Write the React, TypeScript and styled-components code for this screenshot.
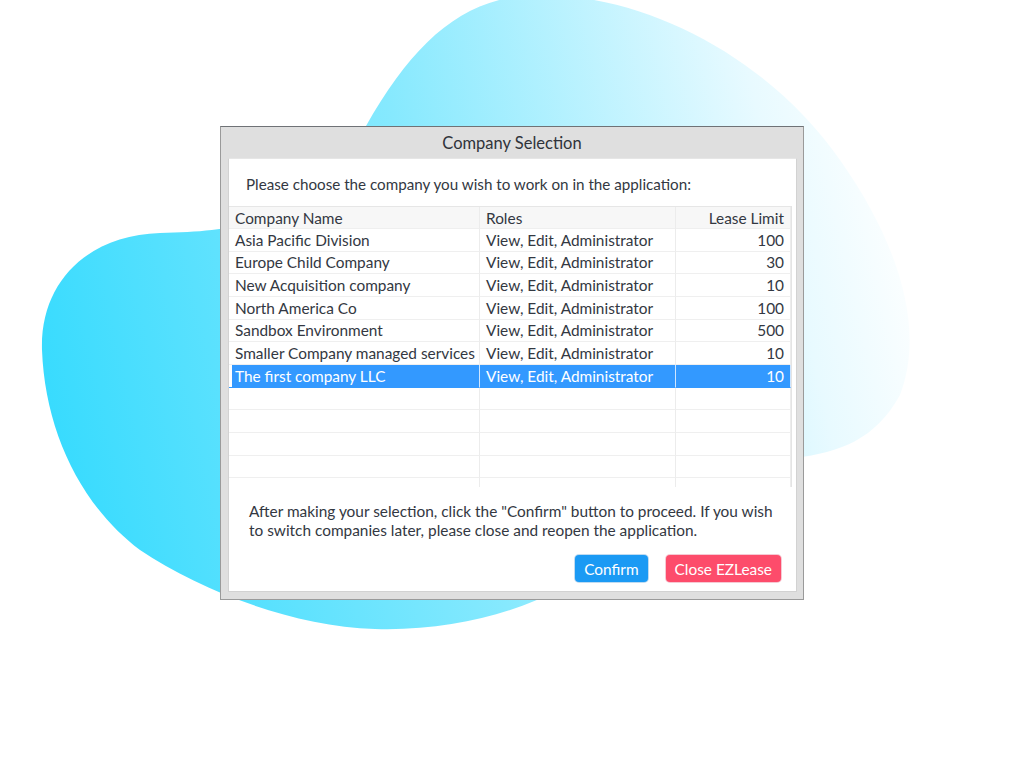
import React from "react";
import styled, { createGlobalStyle, css } from "styled-components";

const GlobalStyle = createGlobalStyle`
  html, body {
    margin: 0;
    padding: 0;
    background: #ffffff;
  }
  body {
    font-family: Lato, "Open Sans", "Liberation Sans", sans-serif;
    -webkit-font-smoothing: antialiased;
  }
`;

const Page = styled.div`
  position: relative;
  width: 1024px;
  height: 768px;
  overflow: hidden;
  background: #ffffff;
  display: flex;
  align-items: flex-start;
  padding: 126px 0 0 220px;
  box-sizing: border-box;
`;

const Blob = styled.svg`
  position: absolute;
  left: 0;
  top: 0;
  width: 1024px;
  height: 768px;
  z-index: 0;
`;

const Dialog = styled.section`
  position: relative;
  z-index: 1;
  width: 584px;
  height: 474px;
  box-sizing: border-box;
  background: #dfdfdf;
  border: 1px solid #9a9a9a;
  border-top-color: #6f7276;
  display: flex;
  flex-direction: column;
`;

const TitleBar = styled.header`
  height: 31px;
  display: flex;
  align-items: center;
  justify-content: center;
  font-size: 16.5px;
  color: #2f333a;
`;

const Body = styled.div`
  flex: 1;
  margin: 0 6px 7px 7px;
  background: #ffffff;
  border: 1px solid #d2d2d2;
  border-top-color: #e6e6e6;
  display: flex;
  flex-direction: column;
`;

const Intro = styled.p`
  margin: 0;
  padding: 15px 0 0 17px;
  height: 47px;
  box-sizing: border-box;
  font-size: 15.2px;
  line-height: 20px;
  color: #333842;
`;

const TableView = styled.div`
  width: 563px;
  height: 281px;
  overflow: hidden;
  border-right: 1px solid #e4e4e4;
  box-sizing: border-box;
  display: flex;
  flex-direction: column;
`;

const Row = styled.div<{ $header?: boolean; $selected?: boolean }>`
  display: grid;
  grid-template-columns: 251px 196px 115px;
  flex: 0 0 auto;
  height: ${(p) => (p.$header ? "23px" : "22.67px")};
  font-size: 15.4px;
  color: #333842;
  ${(p) =>
    p.$header &&
    css`
      background: #f7f7f7;
      border-top: 1px solid #e6e6e6;
      box-sizing: border-box;
    `}
  ${(p) =>
    p.$selected &&
    css`
      color: #ffffff;
    `}
`;

const Cell = styled.div<{ $right?: boolean; $selected?: boolean; $first?: boolean }>`
  display: flex;
  align-items: center;
  justify-content: ${(p) => (p.$right ? "flex-end" : "flex-start")};
  padding: 0 6px;
  box-sizing: border-box;
  border-right: 1px solid #ececec;
  border-bottom: 1px solid #efefef;
  white-space: nowrap;
  overflow: hidden;
  ${(p) =>
    p.$selected &&
    css`
      background: #3399ff;
      border-right-color: #cfe6ff;
      border-bottom-color: #3399ff;
    `}
  ${(p) =>
    p.$selected &&
    p.$first &&
    css`
      box-shadow: inset 3px 0 0 #ffffff;
    `}
`;

const Footer = styled.div`
  flex: 1;
  display: flex;
  flex-direction: column;
  padding: 15px 15px 9px 20px;
`;

const Note = styled.p`
  margin: 0;
  width: 532px;
  font-size: 15.4px;
  line-height: 19px;
  color: #333842;
`;

const Actions = styled.div`
  margin-top: auto;
  display: flex;
  justify-content: flex-end;
  gap: 18px;
`;

const Button = styled.button<{ $tone: "primary" | "danger" }>`
  height: 27px;
  padding: 0 9px;
  border: none;
  border-radius: 4px;
  font-family: inherit;
  font-size: 15.4px;
  color: #ffffff;
  cursor: pointer;
  background: ${(p) => (p.$tone === "primary" ? "#1b9af4" : "#fd4c6b")};
  box-shadow: 0 0 0 1px
    ${(p) => (p.$tone === "primary" ? "rgba(0,110,200,0.25)" : "rgba(220,40,80,0.25)")};
`;

type Company = { name: string; roles: string; limit: string };

const companies: Company[] = [
  { name: "Asia Pacific Division", roles: "View, Edit, Administrator", limit: "100" },
  { name: "Europe Child Company", roles: "View, Edit, Administrator", limit: "30" },
  { name: "New Acquisition company", roles: "View, Edit, Administrator", limit: "10" },
  { name: "North America Co", roles: "View, Edit, Administrator", limit: "100" },
  { name: "Sandbox Environment", roles: "View, Edit, Administrator", limit: "500" },
  { name: "Smaller Company managed services", roles: "View, Edit, Administrator", limit: "10" },
  { name: "The first company LLC", roles: "View, Edit, Administrator", limit: "10" },
];

const SELECTED = 6;

export default function App() {
  return (
    <>
      <GlobalStyle />
      <Page>
        <Blob viewBox="0 0 1024 768" aria-hidden="true">
          <defs>
            <linearGradient id="blobGrad" gradientUnits="userSpaceOnUse" x1="50" y1="420" x2="920" y2="220">
              <stop offset="0" stopColor="#38dbfe" />
              <stop offset="0.45" stopColor="#86e9fe" />
              <stop offset="0.85" stopColor="#e8faff" />
              <stop offset="1" stopColor="#ffffff" />
            </linearGradient>
          </defs>
          <path
            fill="url(#blobGrad)"
            d="M 366 126 C 415 40, 465 -5, 540 -5 C 650 -5, 770 60, 840 160 C 900 245, 925 330, 900 395 C 875 440, 840 452, 795 458 L 600 560 C 560 600, 470 632, 375 629 C 290 626, 200 590, 140 550 C 80 505, 45 430, 42 350 C 40 280, 90 235, 160 233 C 210 232, 240 228, 280 215 Z"
          />
        </Blob>
        <Dialog>
          <TitleBar>Company Selection</TitleBar>
          <Body>
            <Intro>Please choose the company you wish to work on in the application:</Intro>
            <TableView>
              <Row $header>
                <Cell>Company Name</Cell>
                <Cell>Roles</Cell>
                <Cell $right>Lease Limit</Cell>
              </Row>
              {companies.map((c, i) => {
                const sel = i === SELECTED;
                return (
                  <Row key={c.name} $selected={sel}>
                    <Cell $selected={sel} $first>
                      {c.name}
                    </Cell>
                    <Cell $selected={sel}>{c.roles}</Cell>
                    <Cell $selected={sel} $right>
                      {c.limit}
                    </Cell>
                  </Row>
                );
              })}
              {Array.from({ length: 5 }).map((_, i) => (
                <Row key={`empty-${i}`}>
                  <Cell />
                  <Cell />
                  <Cell />
                </Row>
              ))}
            </TableView>
            <Footer>
              <Note>
                After making your selection, click the "Confirm" button to proceed. If you wish to switch
                companies later, please close and reopen the application.
              </Note>
              <Actions>
                <Button $tone="primary">Confirm</Button>
                <Button $tone="danger">Close EZLease</Button>
              </Actions>
            </Footer>
          </Body>
        </Dialog>
      </Page>
    </>
  );
}
